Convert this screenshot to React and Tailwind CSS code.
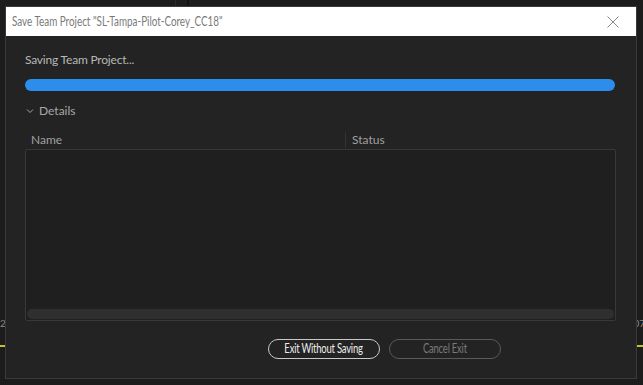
export default function App() {
  return (
    <div
      className="relative w-[643px] h-[385px] overflow-hidden bg-[#1c1c1c]"
      style={{ fontFamily: "Lato, 'Open Sans', sans-serif" }}
    >
      {/* backdrop of the app behind the dialog */}
      <div className="absolute left-[175px] top-0 h-[6px] w-px bg-[#2a2a2a]" />
      <div className="absolute left-[187px] top-0 h-[6px] w-[2px] bg-[#111]" />
      <div className="absolute left-0 top-[345px] h-[2px] w-[6px] bg-[#c8c02a]" />
      <div className="absolute right-0 top-[345px] h-[2px] w-[7px] bg-[#c8c02a]" />
      <div className="absolute left-0 top-[316px] text-[10px] text-[#888]">2</div>
      <div className="absolute right-[-2px] top-[316px] text-[10px] text-[#888]">07</div>

      <div className="relative ml-[5px] mt-[6px] flex h-[373px] w-[632px] flex-col border border-[#3a3a3a] bg-[#232323]">
        {/* title bar */}
        <div className="flex h-[29px] items-center justify-between bg-white pl-[6px] pr-[17px]">
          <span className="inline-block origin-left scale-x-[0.73] whitespace-nowrap text-[13.5px] text-[#7a7a7a]">
            Save Team Project "SL-Tampa-Pilot-Corey_CC18"
          </span>
          <svg width="12" height="12" viewBox="0 0 12 12">
            <path d="M0.5 0.5 L11.5 11.5 M11.5 0.5 L0.5 11.5" stroke="#8a8a8a" strokeWidth="1" fill="none" />
          </svg>
        </div>

        <div className="flex flex-1 flex-col pl-[19px] pr-[19px]">
          <div className="mt-[15px] text-[12px] tracking-[-0.2px] text-[#b8b8b8]">Saving Team Project...</div>
          <div className="mt-[10px] h-[12px] w-[590px] rounded-full bg-[#2c8deb]" />

          <div className="mt-[11px] flex items-center text-[12px] text-[#a8a8a8]">
            <svg width="8" height="6" viewBox="0 0 8 6" className="ml-[1px] mr-[5px]">
              <path d="M1 1.5 L4 4.5 L7 1.5" stroke="#a8a8a8" strokeWidth="1" fill="none" />
            </svg>
            Details
          </div>

          <div className="mt-[11px] flex h-[17px] w-[591px] items-center text-[12px] text-[#a0a0a0]">
            <div className="w-[320px] pl-[6px]">Name</div>
            <div className="h-[16px] w-px bg-[#333]" />
            <div className="pl-[6px]">Status</div>
          </div>

          <div className="mt-[1px] flex h-[172px] w-[591px] flex-col justify-end rounded-[2px] border border-[#383838] bg-[#1f1f1f]">
            <div className="mx-px mb-px h-[10px] rounded-[5px] bg-[#2f2f2f]" />
          </div>

          <div className="mt-[18px] flex gap-[9px] pl-[243px]">
            <button className="flex h-[20px] w-[112px] items-center justify-center rounded-full border border-[#c8c8c8] text-[12.5px] text-[#ececec]">
              <span className="inline-block scale-x-[0.76] whitespace-nowrap tracking-[-0.3px]">Exit Without Saving</span>
            </button>
            <button className="flex h-[20px] w-[112px] items-center justify-center rounded-full border border-[#5a5a5a] text-[12.5px] text-[#7a7a7a]">
              <span className="inline-block scale-x-[0.76] whitespace-nowrap tracking-[-0.3px]">Cancel Exit</span>
            </button>
          </div>
        </div>
      </div>
    </div>
  );
}
